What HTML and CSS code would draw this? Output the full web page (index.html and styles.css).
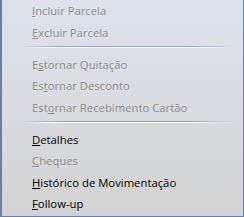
FILE: index.html
```html
<!DOCTYPE html>
<html>
<head>
<meta charset="utf-8">
<link rel="stylesheet" href="styles.css">
</head>
<body>
<div class="menu">
  <div class="item disabled"><span class="k">I</span>ncluir Parcela</div>
  <div class="item disabled"><span class="k">E</span>xcluir Parcela</div>
  <div class="sep"></div>
  <div class="item disabled">E<span class="k">s</span>tornar Quitação</div>
  <div class="item disabled">Es<span class="k">t</span>ornar Desconto</div>
  <div class="item disabled">Est<span class="k">o</span>rnar Recebimento Cartão</div>
  <div class="sep"></div>
  <div class="item"><span class="k">D</span>etalhes</div>
  <div class="item disabled"><span class="k">C</span>heques</div>
  <div class="item"><span class="k">H</span>istórico de Movimentação</div>
  <div class="item"><span class="k">F</span>ollow-up</div>
</div>
</body>
</html>
```
FILE: styles.css
```css
html, body {
  margin: 0;
  padding: 0;
}
body {
  width: 244px;
  height: 217px;
  overflow: hidden;
}
.menu {
  box-sizing: border-box;
  width: 244px;
  height: 217px;
  border-left: 2px solid #6b7da7;
  border-right: 1px solid #6b7da7;
  border-bottom: 1px solid #6b7da7;
  background: linear-gradient(to bottom, #dee2eb 0%, #d9dbe0 50%, #d3d3d3 100%);
  font-family: "Open Sans", "DejaVu Sans", sans-serif;
  font-size: 11.3px;
  color: #000;
}
.item {
  height: 21.5px;
  line-height: 21px;
  padding-left: 30px;
  white-space: nowrap;
}
.item.disabled {
  color: #8e8e8e;
}
.k {
  text-decoration: underline;
  text-underline-offset: 1px;
}
.sep {
  height: 8px;
  margin-left: 22px;
  margin-right: 10px;
}
.sep::before {
  content: "";
  display: block;
  margin-top: 2.5px;
  height: 1px;
  background: linear-gradient(to right, rgba(154,163,196,0) 0%, #9aa3c4 18%, #9aa3c4 78%, rgba(154,163,196,0) 100%);
}
.sep::after {
  content: "";
  display: block;
  height: 1px;
  background: linear-gradient(to right, rgba(255,255,255,0) 0%, rgba(255,255,255,0.9) 18%, rgba(255,255,255,0.9) 78%, rgba(255,255,255,0) 100%);
}
```
